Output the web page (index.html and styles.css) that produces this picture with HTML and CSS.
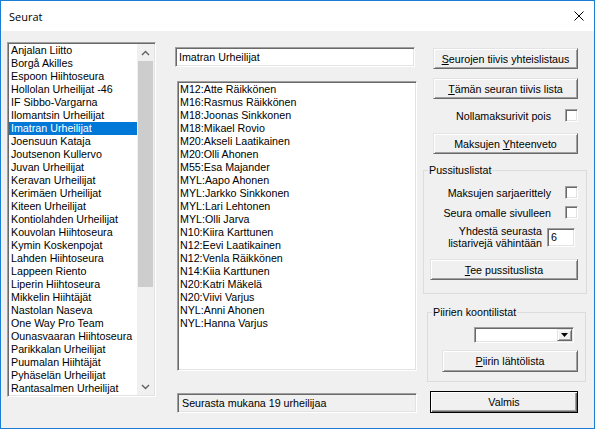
FILE: index.html
```html
<!DOCTYPE html>
<html lang="fi">
<head>
<meta charset="utf-8">
<title>Seurat</title>
<link rel="stylesheet" href="styles.css">
</head>
<body>
<div class="window">
  <div class="titlebar">
    <span class="title">Seurat</span>
    <svg class="close" width="10" height="10" viewBox="0 0 10 10"><path d="M0.5 0.5 L9.5 9.5 M9.5 0.5 L0.5 9.5" stroke="#000" stroke-width="1" fill="none"/></svg>
  </div>
  <div class="content">
    <div class="col-left">
      <div class="sunken listbox clubs">
        <div class="items">
          <div class="item">Anjalan Liitto</div>
          <div class="item">Borgå Akilles</div>
          <div class="item">Espoon Hiihtoseura</div>
          <div class="item">Hollolan Urheilijat -46</div>
          <div class="item">IF Sibbo-Vargarna</div>
          <div class="item">Ilomantsin Urheilijat</div>
          <div class="item selected">Imatran Urheilijat</div>
          <div class="item">Joensuun Kataja</div>
          <div class="item">Joutsenon Kullervo</div>
          <div class="item">Juvan Urheilijat</div>
          <div class="item">Keravan Urheilijat</div>
          <div class="item">Kerimäen Urheilijat</div>
          <div class="item">Kiteen Urheilijat</div>
          <div class="item">Kontiolahden Urheilijat</div>
          <div class="item">Kouvolan Hiihtoseura</div>
          <div class="item">Kymin Koskenpojat</div>
          <div class="item">Lahden Hiihtoseura</div>
          <div class="item">Lappeen Riento</div>
          <div class="item">Liperin Hiihtoseura</div>
          <div class="item">Mikkelin Hiihtäjät</div>
          <div class="item">Nastolan Naseva</div>
          <div class="item">One Way Pro Team</div>
          <div class="item">Ounasvaaran Hiihtoseura</div>
          <div class="item">Parikkalan Urheilijat</div>
          <div class="item">Puumalan Hiihtäjät</div>
          <div class="item">Pyhäselän Urheilijat</div>
          <div class="item">Rantasalmen Urheilijat</div>
        </div>
        <div class="vscroll">
          <div class="sb-btn"><svg width="9" height="6" viewBox="0 0 9 6"><path d="M1 5 L4.5 1.5 L8 5" stroke="#606060" stroke-width="1.4" fill="none"/></svg></div>
          <div class="sb-track"><div class="sb-thumb"></div></div>
          <div class="sb-btn"><svg width="9" height="6" viewBox="0 0 9 6"><path d="M1 1 L4.5 4.5 L8 1" stroke="#606060" stroke-width="1.4" fill="none"/></svg></div>
        </div>
      </div>
    </div>

    <div class="col-mid">
      <div class="sunken textbox">Imatran Urheilijat</div>
      <div class="sunken listbox members">
        <div class="items">
          <div class="item">M12:Atte Räikkönen</div>
          <div class="item">M16:Rasmus Räikkönen</div>
          <div class="item">M18:Joonas Sinkkonen</div>
          <div class="item">M18:Mikael Rovio</div>
          <div class="item">M20:Akseli Laatikainen</div>
          <div class="item">M20:Olli Ahonen</div>
          <div class="item">M55:Esa Majander</div>
          <div class="item">MYL:Aapo Ahonen</div>
          <div class="item">MYL:Jarkko Sinkkonen</div>
          <div class="item">MYL:Lari Lehtonen</div>
          <div class="item">MYL:Olli Jarva</div>
          <div class="item">N10:Kiira Karttunen</div>
          <div class="item">N12:Eevi Laatikainen</div>
          <div class="item">N12:Venla Räikkönen</div>
          <div class="item">N14:Kiia Karttunen</div>
          <div class="item">N20:Katri Mäkelä</div>
          <div class="item">N20:Viivi Varjus</div>
          <div class="item">NYL:Anni Ahonen</div>
          <div class="item">NYL:Hanna Varjus</div>
        </div>
      </div>
      <div class="sunken textbox status">Seurasta mukana 19 urheilijaa</div>
    </div>

    <div class="col-right">
      <div class="btn btn-top"><span><u>S</u>eurojen tiivis yhteislistaus</span></div>
      <div class="btn btn-second"><span><u>T</u>ämän seuran tiivis lista</span></div>
      <div class="check-row check-top"><span>Nollamaksurivit pois</span><span class="sunken checkbox"></span></div>
      <div class="btn btn-third"><span>Maksujen <u>Y</u>hteenveto</span></div>

      <fieldset class="group group-pussi">
        <legend>Pussituslistat</legend>
        <div class="check-row g-row1"><span>Maksujen sarjaerittely</span><span class="sunken checkbox"></span></div>
        <div class="check-row g-row2"><span>Seura omalle sivulleen</span><span class="sunken checkbox"></span></div>
        <div class="min-row">
          <span class="min-label">Yhdestä seurasta<br>listarivejä vähintään</span>
          <span class="sunken num">6</span>
        </div>
        <div class="btn btn-tee"><span><u>T</u>ee pussituslista</span></div>
      </fieldset>

      <fieldset class="group group-piiri">
        <legend>Piirien koontilistat</legend>
        <div class="combo-row">
          <div class="sunken combo"><span class="combo-field"></span><span class="combo-btn"><svg width="7" height="4" viewBox="0 0 7 4"><path d="M0 0 H7 L3.5 4 Z" fill="#000"/></svg></span></div>
        </div>
        <div class="btn btn-piiri"><span><u>P</u>iirin lähtölista</span></div>
      </fieldset>

      <div class="btn btn-default btn-valmis"><span>Valmis</span></div>
    </div>
  </div>
</div>
</body>
</html>
```

FILE: styles.css
```css
* { box-sizing: border-box; }
html, body { margin: 0; padding: 0; }
body {
  font-family: "Liberation Sans", Arial, sans-serif;
  font-size: 10.7px;
  color: #000;
  background: #f0f0f0;
}
.window {
  width: 595px;
  height: 429px;
  border: 1px solid #1a7fd4;
  display: flex;
  flex-direction: column;
  background: #f0f0f0;
}
.titlebar {
  height: 30px;
  background: #fff;
  display: flex;
  align-items: center;
  padding-left: 8px;
  flex: none;
}
.title {
  font-family: "Open Sans", "Noto Sans", sans-serif;
  font-size: 11px;
}
.close { margin-left: auto; margin-right: 10px; }

.content {
  flex: 1;
  display: flex;
  align-items: flex-start;
  padding: 11px 0 0 6px;
}

/* 3D borders */
.sunken {
  border: 1px solid;
  border-color: #a0a0a0 #fff #fff #a0a0a0;
  box-shadow: inset 1px 1px 0 #696969, inset -1px -1px 0 #e3e3e3;
  padding: 1px;
  background: #fff;
}
.btn {
  display: flex;
  align-items: center;
  justify-content: center;
  background: #f0f0f0;
  border: 1px solid;
  border-color: #e3e3e3 #696969 #696969 #e3e3e3;
  box-shadow: inset 1px 1px 0 #fff, inset -1px -1px 0 #a0a0a0;
  white-space: nowrap;
}
.btn u { text-decoration: underline; text-underline-offset: 1px; }
.btn-default {
  border-color: #000;
  box-shadow: inset 1px 1px 0 #fff, inset -1px -1px 0 #696969, inset -2px -2px 0 #a0a0a0;
}

/* left */
.col-left { width: 149px; flex: none; }
.listbox { display: flex; }
.clubs { height: 355px; }
.items { flex: 1; min-width: 0; }
.item {
  height: 13px;
  line-height: 13px;
  padding-left: 2px;
  white-space: nowrap;
  overflow: hidden;
}
.item.selected { background: #0078d7; color: #fff; }
.vscroll {
  width: 17px;
  flex: none;
  display: flex;
  flex-direction: column;
  background: #f0f0f0;
}
.sb-btn {
  height: 17px;
  display: flex;
  align-items: center;
  justify-content: center;
  flex: none;
}
.sb-track { flex: 1; }
.sb-thumb { height: 226px; margin: 0 1px; background: #cdcdcd; }

/* middle */
.col-mid {
  width: 242px;
  margin-left: 19px;
  flex: none;
  display: flex;
  flex-direction: column;
}
.textbox {
  width: 240px;
  height: 20px;
  margin-top: 5px;
  line-height: 16px;
  padding-left: 3px;
  white-space: nowrap;
}
.members {
  width: 240px;
  height: 290px;
  margin: 14px 0 0 2px;
}
.members .item { padding-left: 1px; }
.status {
  margin: 22px 0 0 2px;
  background: #f0f0f0;
  padding-left: 4px;
}

/* right */
.col-right {
  width: 164px;
  margin-left: 6px;
  flex: none;
  display: flex;
  flex-direction: column;
}
.btn-top, .btn-second, .btn-third { width: 145px; height: 21px; margin-left: 10px; }
.btn-top { margin-top: 6px; }
.btn-second { margin-top: 9px; }
.btn-third { margin-top: 11px; }
.check-row {
  height: 13px;
  display: flex;
  align-items: center;
  justify-content: flex-end;
  gap: 14px;
  white-space: nowrap;
}
.check-top { margin-top: 10px; padding-right: 9px; }
.checkbox { width: 13px; height: 13px; flex: none; }

.group {
  margin: 0;
  padding: 0 0 13px 0;
  border: 1px solid #dcdcdc;
  min-width: 0;
}
.group legend {
  padding: 0 1px;
  margin-left: 4px;
  line-height: 13px;
  height: 13px;
}
.group-pussi { margin-top: 10px; width: 164px; }
.g-row1 { margin-top: 9px; padding-right: 8px; }
.g-row2 { margin-top: 7px; padding-right: 8px; }
.min-row {
  margin-top: 6px;
  display: flex;
  justify-content: flex-end;
  align-items: center;
  gap: 5px;
  padding-right: 11px;
}
.min-label { text-align: right; line-height: 12px; white-space: nowrap; }
.num {
  width: 28px;
  height: 19px;
  line-height: 15px;
  padding-left: 3px;
}
.btn-tee { width: 148px; height: 21px; margin: 10px 0 0 6px; }

.group-piiri { margin: 12px 0 0 4px; width: 159px; padding-bottom: 9px; }
.combo-row {
  margin-top: 8px;
  display: flex;
  justify-content: flex-end;
  padding-right: 11px;
}
.combo {
  width: 100px;
  height: 16px;
  display: flex;
}
.combo-field { flex: 1; }
.combo-btn {
  width: 15px;
  flex: none;
  display: flex;
  align-items: center;
  justify-content: center;
  background: #f0f0f0;
  border: 1px solid;
  border-color: #e3e3e3 #696969 #696969 #e3e3e3;
  box-shadow: inset 1px 1px 0 #fff, inset -1px -1px 0 #a0a0a0;
}
.btn-piiri { width: 136px; height: 22px; margin: 7px 0 0 14px; }
.btn-valmis { width: 148px; height: 22px; margin: 9px 0 0 7px; }
```
